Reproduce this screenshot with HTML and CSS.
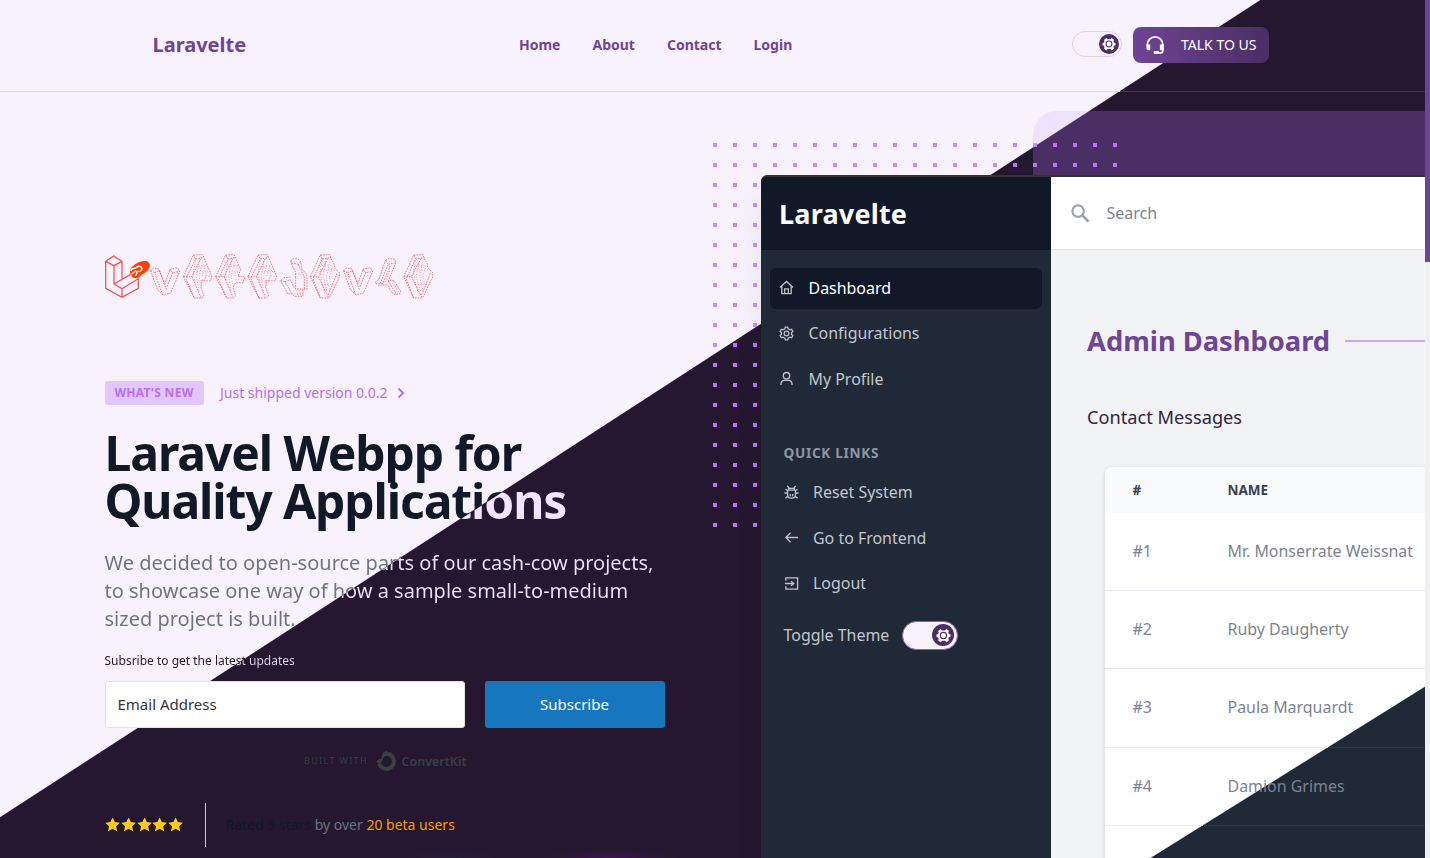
FILE: index.html
```html
<!DOCTYPE html>
<html lang="en">
<head>
<meta charset="utf-8">
<title>Laravelte</title>
<link rel="stylesheet" href="styles.css">
</head>
<body>
<svg class="defs" aria-hidden="true">
  <symbol id="cog" viewBox="0 0 24 24"><path fill="currentColor" d="M9.500 3.800L7.500 1.500L3.500 4.500L4.300 7.800L3.500 9.500L.8 10.500V14L3.500 15L4.300 17L3.500 20L7.500 23L9.500 20.500H14.500L16.500 23L20.500 20L19.700 17L20.500 15L23.200 14V10.500L20.500 9.500L19.700 7.800L20.500 4.500L16.500 1.500L14.500 3.800Z"/><circle cx="12" cy="12" r="5" fill="none" stroke="#4b2e63" stroke-width="1.800"/></symbol>
  <symbol id="star" viewBox="0 0 20 20"><path fill="#facc15" d="M10 .5l3 6.200 6.700.8-5 4.600 1.500 6.900L10 15.500 3.800 19l1.500-6.900-5-4.600L7 6.700z"/></symbol>
  <symbol id="ch-v" viewBox="0 0 88 135" overflow="visible"><path d="M0 50L8 42L25 45L43 88L58 46L80 41L87 53L59 118L36 122L20 106ZM0 50L12 56L36 122M12 56L26 51M26 50L48 108M58 46L66 56L87 53M66 56L48 100"/></symbol>
  <symbol id="ch-a" viewBox="0 0 90 135" overflow="visible"><path d="M0 67L30 2L58 1L86 66L81 80L62 79L56 77L53 100L62 125L55 131L33 131ZM30 2L37 14L8 73L33 131M37 14L60 10M0 67H26L53 10M26 67L52 128"/><path class="thin" d="M37 20L29 60L35 80M48 20L39 66L46 110M57 24L47 68L54 100M66 32L56 70M73 40L64 78M35 80H62M40 52H80M38 36H70M62 79L68 64L86 66"/></symbol>
  <symbol id="ch-e" viewBox="0 0 90 135" overflow="visible"><path d="M0 67L30 2L55 1L75 45L67 67H88L82 85H60L52 100L60 125L53 131L33 131ZM30 2L37 14L8 73L33 131M37 14L58 10M0 67H26L53 10M26 67L52 128"/><path class="thin" d="M37 20L29 60L35 80M48 20L39 66L46 110M57 24L47 68L54 100M66 32L56 70M40 52H72M38 36H66M60 76H86"/></symbol>
  <symbol id="ch-j" viewBox="0 0 82 135" overflow="visible"><path d="M31 20L38 14L54 14L61 22L64 42L80 62V104H68L68 126H42L38 119L22 118L1 79L10 70L32 68M31 20L36 34L46 54V68M34 26L54 30L61 22M54 30L72 68V104M1 79L14 82L35 119M14 82L30 76L42 100M46 68V104H68"/><path class="thin" d="M45 60H62M40 109H68M42 118H70M52 104V126M60 104V124"/></symbol>
  <symbol id="ch-o" viewBox="0 0 90 135" overflow="visible"><path d="M0 67L30 2L58 1L64 18L70 24L74 42L88 56L87 68L57 131L30 131ZM30 2L36 14L8 73L30 131M36 14L62 10M0 67H24L53 10M24 67L54 128M80 57L54 122"/><path class="thin" d="M36 20L29 50L36 90L44 122M48 20L38 66L50 110M58 22L48 68L58 108M67 34L57 68L65 95M34 90H70M30 47H74M36 34H68M40 108H62"/></symbol>
  <symbol id="ch-s" viewBox="0 0 78 135" overflow="visible"><path d="M30 18L37 13L57 14L60 26L38 80L47 77L56 80L75 110L72 119L55 121L42 106L36 92H8L0 87L1 80L9 77ZM30 18L38 30L14 87M38 30L57 26M20 91L44 34M38 80L62 119M0 87H18"/><path class="thin" d="M45 78L70 115M42 50L28 84M52 80L64 106"/></symbol>
</svg>

<div class="page">
  <header class="topbar">
    <a class="brand">Laravelte</a>
    <nav class="nav"><a>Home</a><a>About</a><a>Contact</a><a>Login</a></nav>
    <div class="actions">
      <span class="toggle"><span class="knob"><svg><use href="#cog"/></svg></span></span>
      <a class="talk"><svg viewBox="0 0 24 24"><path fill="none" stroke="#fff" stroke-width="2" d="M2.700 14v-2a8.800 8.800 0 0 1 17.600 0v7q0 2.500-2.500 2.500h-6"/><path fill="#fff" d="M1.700 12H6V18.500H4Q1.700 18.500 1.700 16.500zM21.300 12H17V18.500h4.300zM10 19.500h6V22.500h-6z"/></svg>TALK TO US</a>
    </div>
  </header>

  <main class="hero">
    <div class="backdrop"></div>
    <div class="dots"></div>
    <section class="intro">
      <svg class="logo" viewBox="45 40 1000 140">
        <g class="logo-l"><path d="M47 65L71 49L96 65V120M47 65L72 78L96 65M47 65V146L96 173L145 146V116M72 78V133L96 147V173M96 147L145 117M72 133L122 104"/></g>
        <path d="M120 100Q118 88 129 79Q143 66 162 63Q178 63 180 77Q179 90 164 100Q151 107 145 114Q132 119 124 108Z" fill="#ff3e00"/>
        <path d="M122 94Q126 84 136 86Q146 76 154 82Q159 89 151 94Q146 98 140 94M123 104Q130 100 137 94Q145 100 136 108" fill="none" stroke="#fff" stroke-width="4"/>
        <g class="logo-letters">
          <use href="#ch-v" x="182" y="43" width="88" height="135"/><use href="#ch-a" x="280" y="44" width="90" height="135"/><use href="#ch-e" x="377" y="44" width="90" height="135"/><use href="#ch-a" x="474" y="44" width="90" height="135"/><use href="#ch-j" x="571" y="44" width="82" height="135"/><use href="#ch-o" x="661" y="44" width="90" height="135"/><use href="#ch-v" x="761" y="43" width="88" height="135"/><use href="#ch-s" x="857" y="44" width="78" height="135"/><use href="#ch-o" x="941" y="44" width="90" height="135"/>
        </g>
      </svg>
      <div class="news"><span class="tag">WHAT'S NEW</span><span>Just shipped version 0.0.2</span><svg viewBox="0 0 8 12"><path d="M1.500 1.500L6 6L1.500 10.500" fill="none" stroke="#b96ef5" stroke-width="2"/></svg></div>
      <h1 class="title">Laravel Webpp for<br>Quality Applications</h1>
      <p class="lead">We decided to open-source parts of our cash-cow projects,<br>to showcase one way of how a sample small-to-medium<br>sized project is built.</p>
      <p class="hint">Subsribe to get the latest updates</p>
      <div class="form"><div class="field">Email Address</div><div class="submit">Subscribe</div></div>
      <div class="built"><span>BUILT WITH</span><svg viewBox="0 0 22 20"><path d="M3 12.500A7.600 7.600 0 1 0 7.500 3.200" fill="none" stroke="#373f45" stroke-width="4"/><path d="M.5 11.500Q1.500 7.500 5.500 7.700Q5 3 8.500 1L11 0L12 4Q8 4.500 6.800 8.500Q6.500 11 3.500 13z" fill="#373f45"/></svg><b>ConvertKit</b></div>
      <div class="rating">
        <div class="stars"><svg><use href="#star"/></svg><svg><use href="#star"/></svg><svg><use href="#star"/></svg><svg><use href="#star"/></svg><svg><use href="#star"/></svg></div>
        <p><span class="rated">Rated 5 stars</span> by over <span class="users">20 beta users</span></p>
      </div>
    </section>

    <section class="shot">
      <aside class="side">
        <div class="side-brand">Laravelte</div>
        <ul class="menu">
          <li class="active"><svg viewBox="0 0 16 16"><path d="M1 8L8 1.500L15 8M3 6.500V14.500H13V6.500M6 14V9.500H10V14"/></svg>Dashboard</li>
          <li><svg class="fine" viewBox="0 0 24 26"><path d="M10 2h4l1 3 3 1.500 3-1 2 4-2.300 2v3l2.300 2-2 4-3-1-3 1.500-1 3h-4l-1-3L6 19.500l-3 1-2-4 2.300-2v-3L1 9.500l2-4 3 1L9 5z"/><circle cx="12" cy="13" r="4"/></svg>Configurations</li>
          <li><svg viewBox="0 0 16 16"><circle cx="8" cy="5" r="3.400"/><path d="M2 15Q2 10 6 10H10Q14 10 14 15"/></svg>My Profile</li>
        </ul>
        <div class="quick">
          <h2>QUICK LINKS</h2>
          <ul class="menu links">
            <li><svg viewBox="0 0 16 16"><path d="M3.800 5.500H12.200V10.500Q12.200 14 8 14Q3.800 14 3.800 10.500ZM.5 8.500H3.800M12.200 8.500H15.500M1.500 4.500L4 6M14.500 4.500L12 6M1.500 14L4.300 12M14.500 14L11.700 12M3.500 1L5.500 3.500H10.500L12.500 1M5 5.500V3.500M11 5.500V3.500M6.700 9.500V12M9.300 9.500V12"/></svg>Reset System</li>
            <li><svg viewBox="0 0 16 16"><path d="M15 8H2M7 3L2 8L7 13"/></svg>Go to Frontend</li>
            <li><svg viewBox="0 0 16 16"><path d="M2 5V2H14.500V14H2V11M1 8H10M7.500 5.500L10.500 8L7.500 10.500"/></svg>Logout</li>
          </ul>
          <div class="theme">Toggle Theme<span class="toggle filled"><span class="knob"><svg><use href="#cog"/></svg></span></span></div>
        </div>
      </aside>
      <div class="dash">
        <div class="search"><svg viewBox="0 0 20 20"><circle cx="7.500" cy="7.500" r="6" fill="none" stroke="#9ca3af" stroke-width="2.300"/><path d="M12 12L18.500 18.500" stroke="#9ca3af" stroke-width="2.800"/></svg>Search</div>
        <h2 class="dash-title">Admin Dashboard</h2>
        <h3 class="dash-sub">Contact Messages</h3>
        <div class="table">
          <div class="row head"><span>#</span><span>NAME</span></div>
          <div class="row"><span>#1</span><span>Mr. Monserrate Weissnat</span></div>
          <div class="row"><span>#2</span><span>Ruby Daugherty</span></div>
          <div class="row"><span>#3</span><span>Paula Marquardt</span></div>
          <div class="row"><span>#4</span><span>Damion Grimes</span></div>
          <div class="row"><span>#5</span><span>Chance Weldi</span></div>
        </div>
      </div>
    </section>
    <div class="glow"></div>
  </main>
</div>
<div class="scrollbar"><div class="thumb"></div></div>
</body>
</html>
```
FILE: styles.css
```css
* { box-sizing: border-box; margin: 0; padding: 0; }
:root { --split: 147.04deg; --at: 685.2px; --to: 686.2px; }
body {
  display: flex;
  width: 1430px;
  height: 858px;
  overflow: hidden;
  font-family: "Noto Sans", sans-serif;
  background: linear-gradient(var(--split), #f8f2ff var(--at), #25172f var(--to)) fixed;
}
.defs { position: absolute; width: 0; height: 0; }
ul { list-style: none; }
.page { width: 1425px; height: 858px; display: flex; flex-direction: column; overflow: hidden; }
.scrollbar { width: 5px; height: 858px; background: #f0f0f0; }
.thumb { height: 262px; background: #6f4495; }

.topbar {
  height: 92px;
  flex: none;
  display: grid;
  grid-template-columns: 366.500px 553px 1fr;
  align-items: center;
  padding: 0 0 2px 152.500px;
  border-bottom: 1px solid;
  border-image: linear-gradient(90deg, #e3dfea 1119px, #41384f 1119px) 1;
}
.brand { font-size: 20px; font-weight: 700; color: #6f4495; }
.nav { display: flex; gap: 32px; font-size: 14px; font-weight: 700; color: #6f4495; }
.actions { display: flex; align-items: center; gap: 11px; }
.toggle { display: flex; justify-content: flex-end; align-items: center; width: 50px; height: 26px; padding-right: 2px; border: 1px solid #e4ccfb; border-radius: 15px; background: #f8f2ff; }
.actions .toggle { margin-bottom: 2px; }
.knob { display: grid; place-items: center; width: 20px; height: 20px; border-radius: 50%; background: #4b2e63; color: #fff; }
.knob svg { width: 14px; height: 14px; }
.talk { display: flex; align-items: center; gap: 15px; width: 136px; height: 36px; padding-left: 12px; border-radius: 8px; background: linear-gradient(90deg, #6f4495, #4b2e63); color: #fff; font-size: 14px; white-space: nowrap; }
.talk svg { width: 21px; height: 21px; }

.hero { position: relative; flex: 1; display: grid; grid-template-columns: 560px 664px; column-gap: 96px; padding-left: 105px; }
.backdrop { position: absolute; left: 1033px; top: 19px; width: 420px; height: 120px; border-radius: 24px; background: linear-gradient(var(--split), #f0e2fd var(--at), #4b2e63 var(--to)) fixed; }
.dots { position: absolute; left: 713px; top: 51px; width: 404px; height: 392px; background: linear-gradient(var(--split), #c48dfc var(--at), #b873fe var(--to)) fixed; -webkit-mask: conic-gradient(from 270deg at 4px 4px, #000 90deg, transparent 0) 0 0 / 20px 20px; mask: conic-gradient(from 270deg at 4px 4px, #000 90deg, transparent 0) 0 0 / 20px 20px; }

.intro { display: flex; flex-direction: column; padding-top: 161px; z-index: 1; height: 766px; }
.logo { width: 333.300px; height: 46.700px; flex: none; }
.logo-l { fill: none; stroke: #ef5450; stroke-width: 3.800; }
.logo-letters { fill: none; stroke: #f0564f; stroke-width: 2.200; stroke-dasharray: 5 3; }
.thin { stroke-width: 1.600; stroke-dasharray: 3 5; }
.news { display: flex; align-items: center; height: 24px; margin-top: 81px; font-size: 14px; color: #b96ef5; }
.tag { width: 99px; height: 24px; line-height: 24px; margin-right: 16px; padding-right: 1px; border-radius: 3px; background: #e2c7fc; text-align: center; font-size: 12px; font-weight: 700; letter-spacing: .3px; }
.news svg { width: 8px; height: 12px; margin-left: 9.500px; }
.title, .lead, .hint { margin-left: -.5px; color: transparent; -webkit-background-clip: text; background-clip: text; background-attachment: fixed; white-space: nowrap; }
.title { margin-top: 24px; margin-bottom: -14px; padding-bottom: 14px; font-size: 48px; line-height: 48px; font-weight: 700; letter-spacing: -1.100px; background-image: linear-gradient(var(--split), #111827 var(--at), #f3e5ff var(--to)); }
.lead { margin-top: 24px; font-size: 20px; line-height: 28px; background-image: linear-gradient(var(--split), #6b7280 var(--at), #f0e2fd var(--to)); }
.hint { margin-top: 19px; font-size: 12px; line-height: 18px; background-image: linear-gradient(var(--split), #25172f var(--at), #e5d6f2 var(--to)); }
.form { display: flex; gap: 20px; height: 47px; margin-top: 11px; flex: none; font-size: 15px; line-height: 45px; }
.field { width: 360px; padding-left: 11.500px; background: #fff; border: 1px solid #e3e3e3; border-radius: 3px; color: #333; }
.submit { width: 180px; height: 47px; line-height: 47px; padding-right: 1px; text-align: center; border-radius: 3px; background: #1677be; color: #fff; }
.built { display: flex; align-items: center; height: 22px; margin-top: 22px; padding-left: 199px; color: #373f45; }
.built span { width: 72px; font-size: 9px; letter-spacing: 1.350px; white-space: nowrap; }
.built svg { width: 22px; height: 20px; }
.built b { margin: 1px 0 0 3.500px; font-size: 12.500px; font-weight: 600; }
.rating { display: flex; align-items: center; height: 44px; margin-top: 31px; font-size: 14px; color: #6b7280; }
.stars { display: flex; gap: .6px; width: 101px; height: 44px; align-items: center; border-right: 1px solid #dcbcf8; }
.stars svg { flex: none; width: 15.200px; height: 15.200px; }
.rating p { margin-left: 19.500px; }
.rated { color: #111827; }
.users { color: #f59e0b; }

.shot { z-index: 1; display: grid; grid-template-columns: 290px 374px; height: 683px; margin-top: 83px; border-top: 2px solid #333; border-radius: 6px 0 0 0; overflow: hidden; box-shadow: 0 20px 30px rgba(0,0,0,.07); }
.side { background: #202937; color: #c3c7ce; font-size: 15.950px; }
.side-brand { height: 73px; line-height: 73px; padding-left: 18px; background: #111827; color: #fff; font-size: 27px; font-weight: 700; letter-spacing: .2px; }
.menu { padding: 18px 9px 0; }
.menu li { display: flex; align-items: center; gap: 14px; height: 41px; margin-bottom: 4.500px; padding: 0 0 2px 9px; border-radius: 6px; }
.menu .active { background: #111827; color: #fff; }
.menu svg { width: 15px; height: 15px; margin-right: .5px; fill: none; stroke: #bec3cb; stroke-width: 1.400; }
.menu svg.fine { stroke-width: 2.200; }
.quick { padding-left: 22.500px; margin-top: 44px; }
.quick h2 { font-size: 13.600px; line-height: 18px; letter-spacing: .7px; color: #8f96a3; }
.links { padding: 10px 0 0; }
.links li { padding: 0 0 1px; }
.theme { display: flex; align-items: center; gap: 13px; height: 30px; margin-top: 16px; }
.filled { width: 56px; height: 29px; border-color: #8b63ad; padding-right: 3px; }
.filled .knob { width: 22px; height: 22px; }
.filled .knob svg { width: 15px; height: 15px; }
.dash { background: #f2f3f5; }
.search { display: flex; align-items: center; gap: 16.500px; height: 73px; padding-left: 20px; background: #fff; border-bottom: 1px solid #e3e6ea; color: #7b828e; font-size: 16px; }
.search svg { width: 19px; height: 19px; }
.dash-title { display: flex; align-items: center; gap: 14.500px; height: 40px; margin: 70px 0 0 36px; color: #6f4495; font-size: 27.300px; white-space: nowrap; }
.dash-title::after { content: ""; flex: 1; height: 2px; margin-top: 1px; background: #cda6fb; }
.dash-sub { margin: 43px 0 0 36px; color: #33233d; font-size: 18.200px; line-height: 28px; font-weight: 400; }
.table { margin: 36px 0 0 54px; border-radius: 8px 0 0 0; box-shadow: 0 1px 4px rgba(0,0,0,.15); background: linear-gradient(148.030deg, #fff 1336.500px, #202937 1337.500px) fixed; }
.row { display: grid; grid-template-columns: 95px 1fr; align-items: center; height: 78.200px; padding: 0 0 1px 27.500px; border-bottom: 1px solid; border-image: linear-gradient(90deg, #e4e7eb, #e4e7eb) 1; color: #7c8390; font-size: 15.950px; }
.row:nth-child(4) { border-image: linear-gradient(90deg, #e9ebee 223px, #303947 223px) 1; }
.row:nth-child(5) { border-image: linear-gradient(90deg, #e9ebee 98px, #303947 98px) 1; }
.row:nth-child(6) { padding-top: 3px; }
.row.head { height: 46px; padding-bottom: 0; border: 0; border-radius: 8px 0 0 0; background: #f9fafb; color: #374151; font-size: 13.500px; font-weight: 700; }
.glow { position: absolute; left: 400px; top: 755px; width: 300px; height: 11px; background: radial-gradient(ellipse 70px 9px at 70% 100%, #3a154d, transparent), radial-gradient(ellipse 50px 9px at 18% 100%, #20203a, transparent); }
```
